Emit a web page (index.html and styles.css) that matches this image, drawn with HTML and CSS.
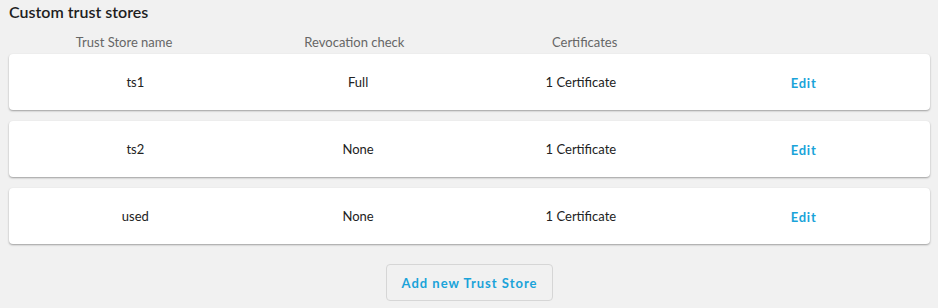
FILE: index.html
```html
<!DOCTYPE html>
<html lang="en">
<head>
    <meta charset="UTF-8">
    <title>Custom trust stores</title>
    <link rel="stylesheet" href="styles.css">
</head>
<body>
    <div class="section">
        <h2 class="title">Custom trust stores</h2>

        <div class="head-row">
            <div class="cell">Trust Store name</div>
            <div class="cell">Revocation check</div>
            <div class="cell">Certificates</div>
            <div class="cell"></div>
        </div>

        <div class="card">
            <div class="cell">ts1</div>
            <div class="cell">Full</div>
            <div class="cell">1 Certificate</div>
            <div class="cell"><a class="edit" href="#">Edit</a></div>
        </div>
        <div class="card">
            <div class="cell">ts2</div>
            <div class="cell">None</div>
            <div class="cell">1 Certificate</div>
            <div class="cell"><a class="edit" href="#">Edit</a></div>
        </div>
        <div class="card">
            <div class="cell">used</div>
            <div class="cell">None</div>
            <div class="cell">1 Certificate</div>
            <div class="cell"><a class="edit" href="#">Edit</a></div>
        </div>

        <div class="actions">
            <button class="add-btn">Add new Trust Store</button>
        </div>
    </div>
</body>
</html>
```

FILE: styles.css
```css
body {
    margin: 0;
    background-color: #f1f1f1;
    font-family: Lato, "Open Sans", sans-serif;
    font-size: 13px;
    color: #222;
}
.section {
    padding: 2px 8px 0 9px;
}
.title {
    margin: 0;
    font-size: 16px;
    font-weight: 600;
    line-height: 20px;
    color: #1e1e1e;
}
.head-row {
    display: grid;
    grid-template-columns: repeat(4, 1fr);
    height: 20px;
    margin-top: 10px;
    margin-bottom: 2px;
    color: #666;
    line-height: 20px;
}
.cell {
    text-align: center;
}
.card {
    display: grid;
    grid-template-columns: repeat(4, 1fr);
    align-items: center;
    height: 56px;
    padding: 0 15px;
    margin-bottom: 11px;
    background: #fff;
    border-radius: 4px;
    box-shadow: 0 1px 2px rgba(0,0,0,0.35);
}
.edit {
    color: #1aa3d9;
    font-weight: 700;
    letter-spacing: 0.8px;
    text-decoration: none;
    position: relative;
    top: 1px;
}
.actions {
    display: flex;
    justify-content: center;
    padding-top: 9px;
}
.add-btn {
    width: 167px;
    height: 37px;
    background: #f1f1f1;
    border: 1px solid #d6d6d6;
    border-radius: 4px;
    color: #1aa3d9;
    font-family: inherit;
    font-size: 13px;
    font-weight: 700;
    letter-spacing: 1px;
    cursor: pointer;
}
```
